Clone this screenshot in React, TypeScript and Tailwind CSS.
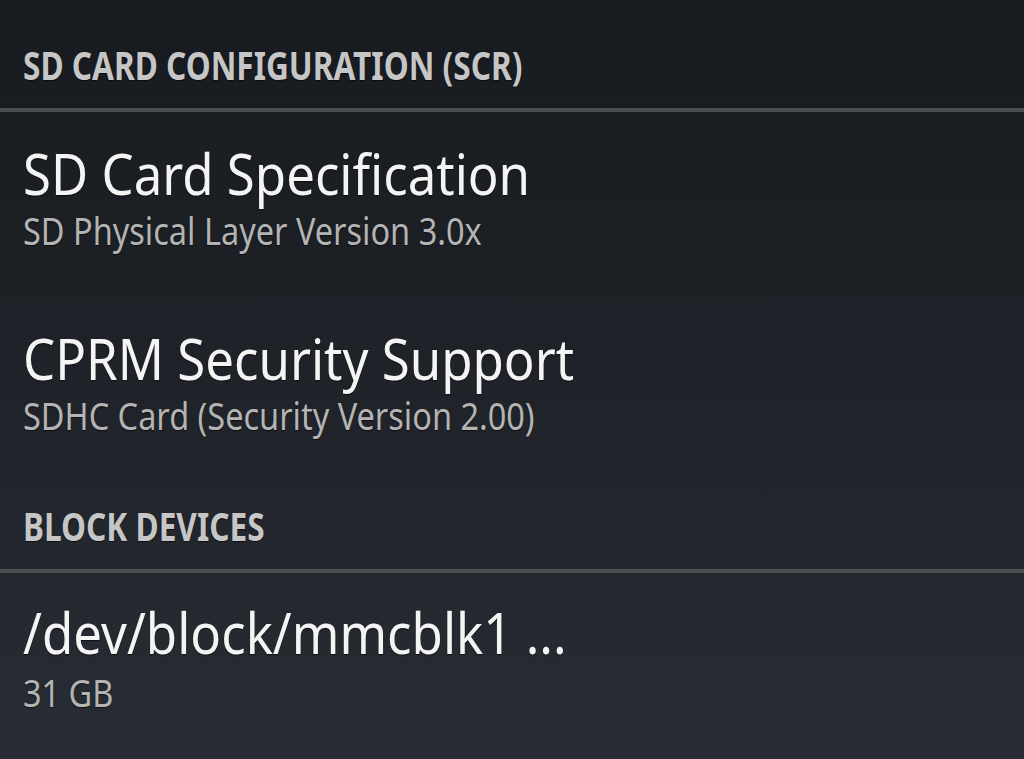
import React from "react";

const font = { fontFamily: '"Noto Sans", "Open Sans", sans-serif' };

const Header = ({ label }: { label: string }) => (
  <div className="px-[23px]">
    <p className="origin-left scale-x-[0.79] text-[40px] font-bold leading-[40px] whitespace-nowrap text-[#c6c6c6] [text-shadow:0_1px_1px_rgba(0,0,0,0.6)]">
      {label}
    </p>
  </div>
);

const Divider = () => <div className="h-[4px] w-full bg-[#4a4d52]" />;

const Item = ({ title, sub, pt, gap, pb }: { title: string; sub: string; pt: string; gap: string; pb: string }) => (
  <div className={`px-[23px] ${pt} ${pb}`}>
    <p className="origin-left scale-x-[0.91] text-[56px] leading-[56px] whitespace-nowrap text-[#f4f4f4] [text-shadow:0_1px_1px_rgba(0,0,0,0.6)]">
      {title}
    </p>
    <p className={`origin-left scale-x-[0.855] text-[38px] leading-[38px] whitespace-nowrap text-[#b4b4b4] [text-shadow:0_1px_1px_rgba(0,0,0,0.6)] ${gap}`}>
      {sub}
    </p>
  </div>
);

export default function App() {
  return (
    <div
      className="h-[759px] w-[1024px] overflow-hidden bg-gradient-to-b from-[#171a1e] to-[#282c34]"
      style={font}
    >
      <div className="h-[108px] pt-[45px]">
        <Header label="SD CARD CONFIGURATION (SCR)" />
      </div>
      <Divider />
      <Item title="SD Card Specification" sub="SD Physical Layer Version 3.0x" pt="pt-[33px]" gap="mt-[10px]" pb="pb-[48px]" />
      <Item title="CPRM Security Support" sub="SDHC Card (Security Version 2.00)" pt="pt-[33px]" gap="mt-[10px]" pb="pb-[48px]" />
      <div className="h-[87px] pt-[24px]">
        <Header label="BLOCK DEVICES" />
      </div>
      <Divider />
      <Item title="/dev/block/mmcblk1 ..." sub="31 GB" pt="pt-[31px]" gap="mt-[13px]" pb="pb-[40px]" />
    </div>
  );
}
